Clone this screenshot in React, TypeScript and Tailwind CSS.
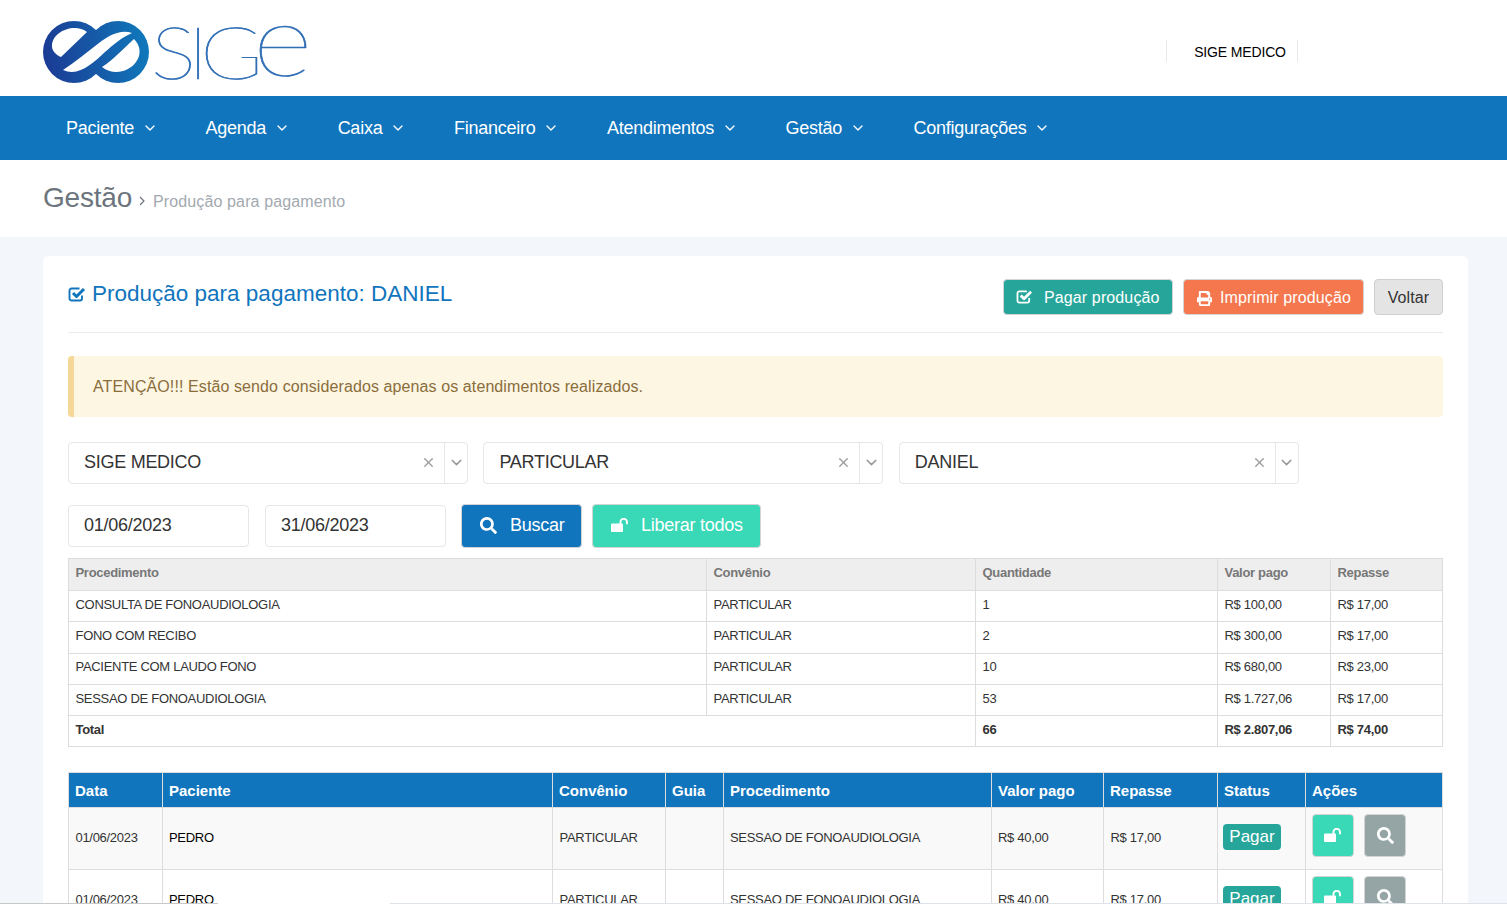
import { ChevronDown, X } from "lucide-react";
import { FaPrint, FaSearch } from "react-icons/fa";

const menu = ["Paciente", "Agenda", "Caixa", "Financeiro", "Atendimentos", "Gestão", "Configurações"];

const resumo = [
  ["CONSULTA DE FONOAUDIOLOGIA", "PARTICULAR", "1", "R$ 100,00", "R$ 17,00"],
  ["FONO COM RECIBO", "PARTICULAR", "2", "R$ 300,00", "R$ 17,00"],
  ["PACIENTE COM LAUDO FONO", "PARTICULAR", "10", "R$ 680,00", "R$ 23,00"],
  ["SESSAO DE FONOAUDIOLOGIA", "PARTICULAR", "53", "R$ 1.727,06", "R$ 17,00"],
];

const atendimentos = [{ zebra: "bg-[#f9f9f9]" }, { zebra: "bg-white" }];

function UnlockIcon({ className }: { className?: string }) {
  return (
    <svg viewBox="0 0 18 14" className={className} fill="currentColor">
      <rect x="0" y="5.500" width="12" height="8.500" rx="1" />
      <path d="M8.500 6V4a4.200 4.200 0 0 1 8.400 0v1.600a.8.8 0 0 1-1.900 0V4a2.300 2.300 0 0 0-4.600 0v2z" />
    </svg>
  );
}

function CheckIcon({ className }: { className?: string }) {
  return (
    <svg viewBox="0 0 18 16" className={className} fill="none" stroke="currentColor" strokeLinejoin="round">
      <path d="M14 9.500v3a2 2 0 0 1-2 2H3.500a2 2 0 0 1-2-2V4.500a2 2 0 0 1 2-2H11.500" strokeWidth="1.900" />
      <path d="M5 7l3.500 3.500L16 3" strokeWidth="3" />
    </svg>
  );
}

function Logo() {
  return (
    <div className="flex items-start">
      <svg width="106" height="64" viewBox="0 0 106 64" fill="none">
        <defs>
          <linearGradient id="logoGrad" gradientUnits="userSpaceOnUse" x1="0" y1="40" x2="106" y2="26">
            <stop offset="0" stopColor="#1b3a94" />
            <stop offset="1" stopColor="#1079bb" />
          </linearGradient>
        </defs>
        <circle cx="31" cy="32" r="31" fill="url(#logoGrad)" />
        <circle cx="75" cy="32" r="31" fill="url(#logoGrad)" />
        <path d="M44 12C40 9 36 8 32 8C20 8 8 16 9 27C9.500 31 13 35 18 37Z" fill="white" />
        <path d="M20 50C32 42 44 32 56 23C66 15 78 9 89 13C78 18 70 25 62 32C50 43 36 57 20 50Z" fill="white" />
        <path d="M91 19C97 25 99 34 93 42C86 52 70 56 59 47C70 40 81 28 91 19Z" fill="white" />
      </svg>
      <div className="ml-[2px] flex h-[67px] items-end font-['Lato',sans-serif] font-thin leading-none text-[#2f6db5] [-webkit-text-stroke:0.7px_#2f6db5]">
        <span className="inline-block w-[102px] origin-left scale-x-[1.18] text-[72px] tracking-[-7px]">SIG</span>
        <span className="inline-block origin-left scale-x-[1.15] text-[100px]">e</span>
      </div>
    </div>
  );
}

function Select({ value }: { value: string }) {
  return (
    <div className="flex h-[42px] w-[400px] items-center rounded-[4px] border border-[#e4e7ea] bg-white text-[18px] tracking-[-0.27px] text-[#333]">
      <span className="flex-1 pb-[2px] pl-[15px]">{value}</span>
      <X size={15} className="mb-[2px] mr-[8px] text-[#999]" />
      <div className="flex h-full w-[23px] items-center justify-center border-l border-[#e4e7ea] pb-[1px]">
        <ChevronDown size={17} className="text-[#999]" />
      </div>
    </div>
  );
}

export default function App() {
  return (
    <div className="relative h-[904px] overflow-hidden bg-[#f3f6fa] font-['Liberation_Sans',Arial,sans-serif] text-[#333]">
      <header className="flex h-[96px] items-start bg-white pl-[43px] pt-[20px]">
        <Logo />
        <div className="ml-auto mr-[209px] mt-[20px] flex h-[22px] w-[132px] items-center justify-center border-x border-[#e8e8e8] pl-[16px] pt-[2px] text-[14px] tracking-[-0.15px] text-black">
          SIGE MEDICO
        </div>
      </header>

      <nav className="flex h-[64px] items-center gap-[47.500px] bg-[#1075bd] pl-[66px] text-[18px] tracking-[-0.25px] text-white">
        {menu.map((item) => (
          <div key={item} className="flex items-center gap-[8px]">
            {item}
            <ChevronDown size={16} />
          </div>
        ))}
      </nav>

      <div className="flex h-[77px] items-center bg-white pl-[43px]">
        <span className="mb-[2px] text-[28px] tracking-[-0.2px] text-[#6c757d]">Gestão</span>
        <span className="ml-[6px] mr-[7px] mt-[4px] text-[#6c757d]">
          <svg width="8" height="10" viewBox="0 0 8 10" fill="none" stroke="currentColor" strokeWidth="1.200">
            <path d="M2 1l4 4-4 4" />
          </svg>
        </span>
        <span className="mt-[6px] text-[16px] tracking-[0.12px] text-[#a3a9b0]">Produção para pagamento</span>
      </div>

      <main className="ml-[43px] mr-[39px] mt-[19px] rounded-[6px] bg-white px-[25px] pt-[23px]">
        <div className="flex items-start justify-between border-b border-[#e9ecef] pb-[17px]">
          <h1 className="flex h-[36px] items-start text-[22.500px] leading-[30px] text-[#1075bd]">
            <CheckIcon className="mr-[6px] mt-[7px] h-[16px] w-[18px]" />
            Produção para pagamento: DANIEL
          </h1>
          <div className="flex gap-[10px] text-[16px] tracking-[0.12px]">
            <button className="flex h-[36px] w-[170px] items-center rounded-[4px] border border-[#d4d4d4] bg-[#26a69a] pl-[12px] pt-[2px] text-white">
              <CheckIcon className="mb-[3px] mr-[11px] h-[15px] w-[17px]" />
              Pagar produção
            </button>
            <button className="flex h-[36px] w-[181px] items-center rounded-[4px] border border-[#d4d4d4] bg-[#f4774d] pl-[13px] pt-[2px] text-white">
              <FaPrint size={15} className="mr-[8px]" />
              Imprimir produção
            </button>
            <button className="flex h-[36px] w-[69px] items-center justify-center rounded-[4px] border border-[#cfcfcf] bg-[#e4e4e4] pt-[2px] text-[#333]">
              Voltar
            </button>
          </div>
        </div>

        <div className="mt-[23px] flex h-[61px] items-center rounded-[4px] border-l-[6px] border-[#f5d798] bg-[#fdf6e3] pl-[19px] text-[16px] tracking-[0.1px] text-[#8a6d3b]">
          ATENÇÃO!!! Estão sendo considerados apenas os atendimentos realizados.
        </div>

        <div className="mt-[25px] flex gap-[15.400px]">
          <Select value="SIGE MEDICO" />
          <Select value="PARTICULAR" />
          <Select value="DANIEL" />
        </div>

        <div className="mt-[20px] flex items-center text-[18px] tracking-[-0.25px]">
          <div className="flex h-[42px] w-[181px] items-center rounded-[4px] border border-[#e4e7ea] pb-[2px] pl-[15px]">
            01/06/2023
          </div>
          <div className="ml-[16px] flex h-[42px] w-[181px] items-center rounded-[4px] border border-[#e4e7ea] pb-[2px] pl-[15px]">
            31/06/2023
          </div>
          <button className="ml-[15px] flex h-[44px] w-[121px] items-center rounded-[4px] border border-[#d4d4d4] bg-[#1075bd] pb-[2px] pl-[18px] text-white">
            <FaSearch size={17} className="mr-[13px]" />
            Buscar
          </button>
          <button className="ml-[10px] flex h-[44px] w-[169px] items-center rounded-[4px] border border-[#d4d4d4] bg-[#39d8b6] pb-[2px] pl-[18px] text-white">
            <UnlockIcon className="mr-[12px] h-[14px] w-[18px]" />
            Liberar todos
          </button>
        </div>

        <table className="mt-[10px] w-[1374px] table-fixed border-collapse text-[13px] tracking-[-0.3px]">
          <colgroup>
            <col className="w-[638px]" />
            <col className="w-[269px]" />
            <col className="w-[242px]" />
            <col className="w-[113px]" />
            <col className="w-[112px]" />
          </colgroup>
          <thead>
            <tr className="h-[32px] bg-[#eeeeee] text-left text-[#777]">
              {["Procedimento", "Convênio", "Quantidade", "Valor pago", "Repasse"].map((h) => (
                <th key={h} className="border border-[#ddd] px-[6.500px] pb-[3px] font-bold">
                  {h}
                </th>
              ))}
            </tr>
          </thead>
          <tbody>
            {resumo.map((row) => (
              <tr key={row[0]} className="h-[31.300px]">
                {row.map((cell, i) => (
                  <td key={i} className="border border-[#ddd] px-[6.500px] pb-[3px]">
                    {cell}
                  </td>
                ))}
              </tr>
            ))}
            <tr className="h-[31px] font-bold">
              <td colSpan={2} className="border border-[#ddd] px-[6.500px] pb-[3px]">
                Total
              </td>
              <td className="border border-[#ddd] px-[6.500px] pb-[3px]">66</td>
              <td className="border border-[#ddd] px-[6.500px] pb-[3px]">R$ 2.807,06</td>
              <td className="border border-[#ddd] px-[6.500px] pb-[3px]">R$ 74,00</td>
            </tr>
          </tbody>
        </table>

        <table className="mt-[25px] w-[1374px] table-fixed border-collapse text-[13px] tracking-[-0.3px]">
          <colgroup>
            <col className="w-[94px]" />
            <col className="w-[390px]" />
            <col className="w-[113px]" />
            <col className="w-[58px]" />
            <col className="w-[268px]" />
            <col className="w-[112px]" />
            <col className="w-[114px]" />
            <col className="w-[88px]" />
            <col className="w-[137px]" />
          </colgroup>
          <thead>
            <tr className="h-[35px] bg-[#1075bd] text-left text-[15px] tracking-normal text-white">
              {["Data", "Paciente", "Convênio", "Guia", "Procedimento", "Valor pago", "Repasse", "Status", "Ações"].map((h) => (
                <th key={h} className="border border-[#ddd] px-[6px] pt-[2px] font-bold">
                  {h}
                </th>
              ))}
            </tr>
          </thead>
          <tbody>
            {atendimentos.map((row, i) => (
              <tr key={i} className={`h-[62px] ${row.zebra}`}>
                <td className="border border-[#ddd] px-[6.500px] pb-[2px]">01/06/2023</td>
                <td className="border border-[#ddd] px-[6px] pb-[2px] text-black">PEDRO</td>
                <td className="border border-[#ddd] px-[6.500px] pb-[2px]">PARTICULAR</td>
                <td className="border border-[#ddd] px-[6px]"></td>
                <td className="border border-[#ddd] px-[6px] pb-[2px]">SESSAO DE FONOAUDIOLOGIA</td>
                <td className="border border-[#ddd] px-[6px] pb-[2px]">R$ 40,00</td>
                <td className="border border-[#ddd] px-[6.500px] pb-[2px]">R$ 17,00</td>
                <td className="border border-[#ddd] pl-[5px] pr-[6px]">
                  <span className="mb-[3px] inline-flex h-[26px] w-[58px] items-center justify-center rounded-[4px] bg-[#26a69a] text-[17px] tracking-normal text-white">
                    Pagar
                  </span>
                </td>
                <td className="border border-[#ddd] px-[6px]">
                  <div className="mb-[7px] flex gap-[10px]">
                    <button className="flex h-[43px] w-[42px] items-center justify-center rounded-[4px] border border-[#d4d4d4] bg-[#39d8b6] text-white">
                      <UnlockIcon className="h-[14px] w-[18px]" />
                    </button>
                    <button className="flex h-[43px] w-[42px] items-center justify-center rounded-[4px] border border-[#d4d4d4] bg-[#95a5a6] text-white">
                      <FaSearch size={17} />
                    </button>
                  </div>
                </td>
              </tr>
            ))}
          </tbody>
        </table>
      </main>

      <div className="absolute bottom-0 left-0 h-px w-[218px] bg-[#c8c8c8]" />
      <div className="absolute bottom-0 left-[390px] h-px w-[1117px] bg-[#dde3e8]" />
    </div>
  );
}
